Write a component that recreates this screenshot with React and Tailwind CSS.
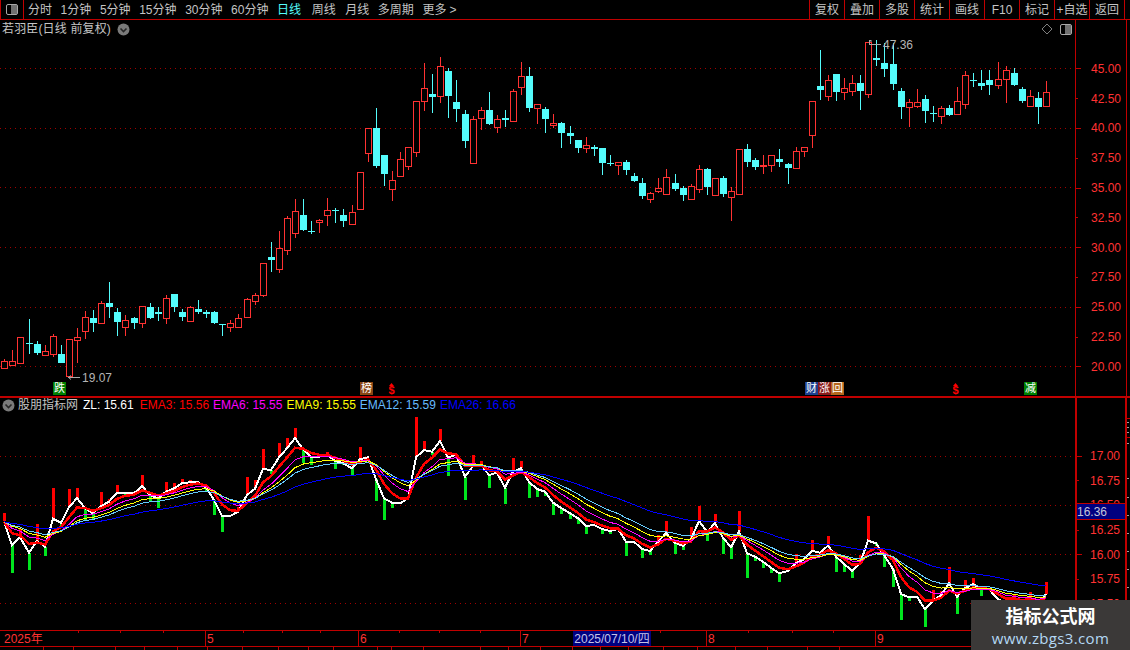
import React from "react";

const RED = "#ff3232";
const CYAN = "#54fcfc";
const FONT = "font-['Liberation_Sans','Noto_Sans_CJK_SC',sans-serif]";

// [red?, high, top, bottom, low] in 3x crop units, per crop y-origin
const A = [
  [1,537,544,566,566],[1,510,544,557,557],[1,472,472,551,551],[0,417,489,492,522],[0,484,492,518,524],
  [1,495,514,527,527],[1,462,469,524,530],[0,495,522,549,549],[1,478,478,591,591],[1,444,472,483,549],
  [1,393,412,455,477],[0,390,414,429,456],[1,363,370,431,431],[0,306,369,381,414],[0,384,396,426,468],
  [1,405,421,443,468],[0,411,414,429,447],[1,378,379,431,444],[0,369,381,414,418],[0,381,396,402,423],
  [1,346,355,417,432],[0,342,342,381,396],[0,387,396,411,423],[1,378,382,425,425],[0,360,387,396,402],
  [0,390,396,402,414],[0,393,396,429,432],[0,432,432,434,468],[1,420,430,443,456],[1,402,415,443,443],
  [1,355,358,413,413],[1,339,346,365,375],[1,250,250,347,351],[0,186,231,240,276],[1,153,205,269,279],
  [1,108,115,212,225],[1,57,94,161,174],[0,57,105,150,153],[0,123,153,156,162],[1,117,121,129,159],
  [1,54,91,109,138],[0,84,90,93,129],[0,87,105,123,141],[1,75,97,134,134],[1,-23,-23,89,89],
  [1,-155,-155,-79,-55],[0,-215,-155,-43,-37],
];
const B = [
  [0,345,345,402,438],[1,393,421,449,483],[1,336,358,410,410],[1,322,322,380,389],[1,184,184,338,350],
  [1,69,145,185,213],[0,102,162,171,219],[1,51,79,170,189],[0,84,93,168,234],[0,120,186,207,246],
  [0,210,222,303,324],[1,228,238,371,371],[1,201,211,236,270],[0,156,210,252,255],[1,225,238,263,279],
  [0,210,234,240,261],[1,148,154,245,245],[1,66,109,143,165],[0,81,108,204,216],[1,193,193,206,252],
  [0,201,207,237,279],[1,222,250,257,265],[0,246,249,279,324],[0,258,279,288,312],[0,300,300,324,339],
  [1,291,316,326,339],[0,315,321,327,348],[0,324,324,369,405],[0,345,369,372,378],[1,367,367,377,405],
  [0,360,366,390,405],[0,399,408,423,426],[0,414,429,468,477],[1,456,460,479,489],[1,414,445,455,459],
  [1,387,412,464,464],[0,402,429,447,453],[0,438,444,465,483],[1,432,439,479,479],[1,375,388,449,459],
  [0,384,387,441,465],[1,415,415,467,467],[0,408,414,462,471],[1,441,454,473,543],[1,328,328,464,464],
  [0,312,327,366,381],[0,354,360,381,390],
];
const C = [
  [1,375,406,409,432],[1,376,376,407,426],[0,357,387,396,411],[0,399,402,414,462],[1,351,363,416,416],
  [1,351,351,365,381],[1,214,214,317,354],[0,60,168,180,210],[1,135,151,200,213],[0,132,132,186,213],
  [1,144,175,189,210],[1,135,160,185,198],[0,135,159,183,240],[1,37,37,194,204],[0,30,84,90,108],
  [0,40,99,117,141],[0,40,102,162,180],[0,174,183,231,267],[1,207,217,233,291],[1,177,217,231,234],
  [0,195,207,243,279],[0,228,249,252,276],[1,228,235,261,282],[0,225,234,255,258],[1,171,214,255,255],
  [1,123,136,224,237],[0,129,150,153,171],[0,120,159,168,180],[0,120,150,165,195],[1,96,148,167,177],
  [1,108,121,149,219],[0,114,129,165,168],[0,171,177,213,219],[1,180,199,231,231],[0,186,204,231,282],
  [1,153,187,231,231],
];
const conv = (arr, y0) => arr.map(([r, h, t, b, l]) => [r, h / 3 + y0, t / 3 + y0, b / 3 + y0, l / 3 + y0]);
const candles = [...conv(A, 180), ...conv(B, 40), ...conv(C, 30)];
const X = (i) => Math.round(4.3 + 8.075 * i);

// [white line y, bar far end] in 3x crop units; end above = red, below = green
const Z1 = [
  [305,280],[375,458],[352,328],[398,449],[363,312],[380,407],[296,205],[308,320],[262,208],[234,205],
  [265,300],[280,300],[258,217],[245,238],[218,196],[219,225],[220,null],[198,166],[225,245],[235,264],
  [215,186],[205,190],[190,178],[187,181],[187,null],[202,214],[240,285],[288,335],[288,null],[275,262],
  [225,171],[206,181],[147,87],[150,162],[112,70],[85,54],[54,24],[88,130],[112,137],[110,null],
  [105,97],[122,147],[130,137],[145,167],[118,82],[112,null],[178,243],
  [235,300],[248,264],[250,null],[235,null],[112,-9],[90,63],[95,105],[63,27],[112,168],[105,102],
  [170,240],[138,105],[135,123],[165,204],[158,null],[203,252],[155,114],[145,123],[186,234],[207,231],
  [215,228],[248,285],[264,282],[280,297],[295,312],[318,342],[315,null],[327,342],[333,342],[327,null],
  [365,408],[365,null],[387,414],[393,405],[365,345],[340,303],[368,402],[378,390],[358,321],[303,258],
  [335,363],[310,282],[353,402],[382,417],[335,273],[400,474],[410,423],
];
const Z2 = [
  [185,204],[203,219],[220,246],[213,null],[190,162],[178,null],[152,120],[158,null],[137,108],[170,216],
  [192,216],[212,234],[190,165],[122,48],[130,140],[165,201],[207,261],[282,360],[292,303],[290,null],
  [328,381],[302,270],[285,273],[250,202],[290,342],[265,240],[252,234],[268,288],[268,null],[298,null],
  [310,null],[295,283],[305,null],[295,277],[310,null],[282,246],
];
const zl = [
  ...Z1.map(([w, e]) => [w / 3 + 420, e === null ? null : e / 3 + 420]),
  ...Z2.map(([w, e]) => [w / 3 + 500, e === null ? null : e / 3 + 500]),
];
const ema = (n) => {
  const a = 2 / (n + 1);
  let v = zl[0][0];
  return zl.map(([w]) => (v = a * w + (1 - a) * v));
};
const pts = (ys) => ys.map((y, i) => `${X(i)},${y.toFixed(1)}`).join(" ");

const topPrices = ["45.00","42.50","40.00","37.50","35.00","32.50","30.00","27.50","25.00","22.50","20.00"];
const lowPrices = ["17.00","16.75","16.50","16.25","16.00","15.75","15.50"];
const toolbarLeft = [
  ["分时",""],["1分钟",""],["5分钟",""],["15分钟",""],["30分钟",""],["60分钟",""],
  ["日线","text-[#54fcfc]"],["周线","ml-[2px]"],["月线","ml-[1px]"],["多周期",""],
];
const toolbarRight = ["复权","叠加","多股","统计","画线","F10","标记","+自选","返回"];
const months = [["2025年","w-[205px] border-l-0 pl-[4px]"],["5","w-[153px] pl-[1px]"],["6","w-[162px] pl-[1px]"],["7","w-[186px] pl-[1px]"],["8","w-[169px] pl-[1px]"],["9","flex-1 pl-[1px]"]];
const minorTicks = [78,120,163,243,282,320,399,439,480,660,748,792,833];
const statusCells = [43,73,115,144,177,207,242,278,308,333,377,391,423,480,508,540,572,600,628,663,697,735,767,807,839];

const Chevron = () => (
  <svg width="13" height="13" viewBox="0 0 13 13" className="shrink-0">
    <circle cx="6.5" cy="6.5" r="6" fill="#7a7a7a" />
    <path d="M3.5 5.5 L6.5 8.5 L9.5 5.5" fill="none" stroke="#262626" strokeWidth="1.6" />
  </svg>
);

const Tag = ({ bg, className = "", children }) => (
  <span className={`flex items-center justify-center w-[13px] h-[13px] text-[11px] leading-none text-white ${bg} ${className}`}>{children}</span>
);

const Dollar = ({ className = "" }) => (
  <span className={`flex flex-col items-center text-[#ff0000] font-bold text-[11px] leading-[9px] w-[7px] ${className}`}>
    <svg width="5" height="3" viewBox="0 0 5 3" className="block"><path d="M2.5 0 L5 3 H0 Z" fill="#ff0000" /></svg>
    $
  </span>
);

const PaneIcon = () => (
  <div className="flex h-[11px] w-[12px] justify-end rounded-[2px] border border-[#a8a8a8]">
    <div className="h-full w-[6px] bg-[#707070]" />
  </div>
);

const AxisLabel = ({ tick, h, gutter, children }) => (
  <div className={`flex items-center ${h}`}>
    <div className={`shrink-0 ${gutter}`}>
      <div className={`h-px bg-[#c00000] ${tick}`} />
    </div>
    <span className="leading-none">{children}</span>
  </div>
);

export default function App() {
  return (
    <div className={`relative w-[1130px] h-[650px] overflow-hidden bg-black text-[12px] ${FONT}`}>
      {/* Toolbar */}
      <div className="flex h-[20px] items-center border-b border-[#c00000] text-[#c4c4c4]">
        <div className="flex h-full w-[24px] items-center justify-center border-x border-[#c00000]">
          <PaneIcon />
        </div>
        <div className="ml-[4px] flex gap-[8.6px]">
          {toolbarLeft.map(([t, c]) => (
            <span key={t} className={c}>{t}</span>
          ))}
          <span>更多<span className="ml-[3px]">&gt;</span></span>
        </div>
        <div className="ml-auto mr-[5px] flex h-full border-r border-[#c00000]">
          {toolbarRight.map((t) => (
            <div key={t} className="flex w-[35px] items-center justify-center border-l border-[#c00000]">{t}</div>
          ))}
        </div>
      </div>

      {/* Price pane */}
      <div className="flex h-[378px] border-b-2 border-[#c00000]">
        <div className="relative h-[376px] w-[1075px]">
          <svg width="1075" height="376" viewBox="0 20 1075 376" className="block">
            {[68,128,187,247,307,366].map((y) => (
              <line key={y} x1="0" x2="1075" y1={y + 0.5} y2={y + 0.5} stroke="#a00000" strokeDasharray="1 4" />
            ))}
            {candles.map(([r, h, t, b, l], i) => {
              const x = X(i);
              const ty = Math.round(t), by = Math.max(Math.round(b), ty + 1);
              const c = r ? RED : CYAN;
              return (
                <g key={i}>
                  <rect x={x} y={Math.round(h)} width="1" height={Math.max(ty - Math.round(h), 0)} fill={c} />
                  <rect x={x} y={by} width="1" height={Math.max(Math.round(l) - by, 0)} fill={c} />
                  {r ? (
                    <rect x={x - 2.5} y={ty + 0.5} width="6" height={Math.max(by - ty - 1, 1)} fill="#000" stroke={c} />
                  ) : (
                    <rect x={x - 3} y={ty} width="7" height={Math.max(by - ty, 1)} fill={c} />
                  )}
                </g>
              );
            })}
            <path d="M68 377.5 H80 M68.5 377.5 L71 375.5 M68.5 377.5 L71 379.5" stroke="#a8a8a8" fill="none" />
            <path d="M869 44.5 H881 M869.5 44.5 V41 H872 M869 40.5 H871" stroke="#a8a8a8" fill="none" />
          </svg>
          <div className="absolute inset-x-0 top-[2px] flex items-center justify-between pl-[2px] pr-[3px] leading-[14px] text-[#c4c4c4]">
            <div className="flex items-center gap-[6px]">
              <span className="tracking-[0.15px]">若羽臣(日线 前复权)</span>
              <Chevron />
            </div>
            <div className="flex items-center gap-[7px]">
              <svg width="12" height="12" viewBox="0 0 12 12"><path d="M6 1 L11 6 L6 11 L1 6 Z" fill="none" stroke="#808080" /></svg>
              <PaneIcon />
            </div>
          </div>
          <div className="absolute left-[82px] top-[351px] leading-[14px] text-[#b4b4b4]">19.07</div>
          <div className="absolute left-[883px] top-[18px] leading-[14px] text-[#b4b4b4]">47.36</div>
          <div className="absolute bottom-[1px] left-[53px] flex items-end">
            <Tag bg="bg-[#008000]">跌</Tag>
            <Tag bg="bg-[#8b4513]" className="ml-[294px]">榜</Tag>
            <Dollar className="ml-[15px]" />
            <Tag bg="bg-[#1d3f8f]" className="ml-[410px]">财</Tag>
            <Tag bg="bg-[#8b1a1a]">涨</Tag>
            <Tag bg="bg-[#b5651d]">回</Tag>
            <Dollar className="ml-[108px]" />
            <Tag bg="bg-[#008000]" className="ml-[65px]">减</Tag>
          </div>
        </div>
        <div className="h-full w-[52px] border-x border-[#c00000] pt-[34px] text-[#ff3232]">
          {topPrices.map((t) => (
            <AxisLabel key={t} h="h-[29.8px]" gutter="w-[15px]" tick={t.endsWith("2.50") || t.endsWith("7.50") ? "w-[2px]" : "w-[5px]"}>{t}</AxisLabel>
          ))}
        </div>
      </div>

      {/* Indicator pane */}
      <div className="flex h-[232px]">
        <div className="relative h-full w-[1075px]">
          <svg width="1075" height="232" viewBox="0 398 1075 232" className="block" shapeRendering="crispEdges">
            {[456,505,554,603].map((y) => (
              <line key={y} x1="0" x2="1075" y1={y + 0.5} y2={y + 0.5} stroke="#a00000" strokeDasharray="1 4" />
            ))}
            {zl.map(([w, e], i) => {
              if (e === null) return null;
              const up = e < w;
              const y = Math.round(Math.min(w, e));
              return <rect key={i} x={X(i) - 1} y={y} width="3" height={Math.max(Math.round(Math.abs(e - w)), 1)} fill={up ? "#ff0000" : "#00e61e"} />;
            })}
            <polyline points={pts(zl.map((z) => z[0]))} fill="none" stroke="#ffffff" strokeWidth="2" />
            <polyline points={pts(ema(3))} fill="none" stroke="#ff0000" strokeWidth="2.5" />
            <polyline points={pts(ema(6))} fill="none" stroke="#ff00ff" />
            <polyline points={pts(ema(9))} fill="none" stroke="#ffff00" />
            <polyline points={pts(ema(12))} fill="none" stroke="#66ccff" />
            <polyline points={pts(ema(26))} fill="none" stroke="#0000ff" />
          </svg>
          <div className="absolute left-[2px] top-0 flex h-[14px] items-center gap-[4px] whitespace-nowrap leading-[14px]">
            <Chevron />
            <span className="-ml-[1px] mr-[1px] text-[#c4c4c4]">股朋指标网</span>
            <span className="mr-[2px] text-white">ZL: 15.61</span>
            <span className="text-[#ff0000]">EMA3: 15.56</span>
            <span className="text-[#ff00ff]">EMA6: 15.55</span>
            <span className="text-[#ffff00]">EMA9: 15.55</span>
            <span className="text-[#66bbff]">EMA12: 15.59</span>
            <span className="text-[#0000ff]">EMA26: 16.66</span>
          </div>
        </div>
        <div className="relative h-full w-[52px] border-x-2 border-[#c00000] pt-[46px] text-[#ff3232]">
          {lowPrices.map((t) => (
            <AxisLabel key={t} h="h-[24.6px]" gutter="w-[13px]" tick={t.endsWith(".00") ? "w-[5px]" : "w-[2px]"}>{t}</AxisLabel>
          ))}
          <div className="absolute inset-x-0 top-[105px] flex h-[17px] items-center border-y border-[#c00000] bg-[#000080] text-[#c4c4d8]">16.36</div>
        </div>
        <svg width="3" height="232" viewBox="0 0 3 232" className="block" shapeRendering="crispEdges">
          <rect y="20" width="3" height="1" fill="#c00000" />
          <rect y="39" width="3" height="1" fill="#c00000" />
          {[24,29,34,45,80,99,117,135,153,171,189,207].map((y) => (
            <rect key={y} y={y} width="2" height="1" fill="#a0a0a0" />
          ))}
        </svg>
      </div>

      {/* Time axis */}
      <div className="relative flex h-[16px] border-t border-[#c00000] text-[#ff3232]">
        {months.map(([t, c]) => (
          <div key={t} className={`flex items-center border-l border-[#c00000] ${c}`}>{t}</div>
        ))}
        <svg width="1130" height="2" viewBox="0 0 1130 2" className="absolute left-0 top-0">
          {minorTicks.map((x) => (
            <rect key={x} x={x} width="1" height="2" fill="#c00000" />
          ))}
        </svg>
        <div className="absolute left-[573px] top-0 flex h-[15px] w-[78px] items-center justify-center bg-[#000080] text-[#c4c4e8]">2025/07/10/四</div>
      </div>

      {/* Clipped status bar */}
      <svg width="1130" height="4" viewBox="0 0 1130 4" className="block">
        <rect width="1130" height="1" fill="#c00000" />
        {statusCells.map((x) => (
          <rect key={x} x={x} width="1" height="4" fill="#c00000" />
        ))}
      </svg>

      {/* Watermark */}
      <div className="absolute bottom-0 right-0 flex h-[50px] w-[159px] flex-col items-center bg-[#3b3938]">
        <span className="mt-[5px] text-[18px] font-bold leading-[24px] text-white">指标公式网</span>
        <span className="font-['Open_Sans',sans-serif] text-[15px] leading-[18px] tracking-[0.35px] text-[#b4d8f4]">www.zbgs3.com</span>
      </div>
    </div>
  );
}
